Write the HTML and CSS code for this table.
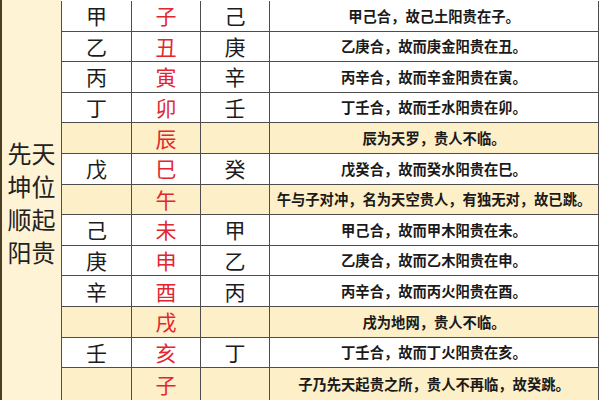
FILE: index.html
```html
<!DOCTYPE html>
<html lang="zh-CN">
<head>
<meta charset="utf-8">
<title>先天坤位顺起阳贵</title>
<link rel="stylesheet" href="styles.css">
</head>
<body>
<div class="page">
  <div class="side">
    <div class="side-text">先天<br>坤位<br>顺起<br>阳贵</div>
  </div>
  <div class="grid">
    <div class="c">甲</div><div class="c red">子</div><div class="c">己</div><div class="c note">甲己合，故己土阳贵在子。</div>
    <div class="c">乙</div><div class="c red">丑</div><div class="c">庚</div><div class="c note">乙庚合，故而庚金阳贵在丑。</div>
    <div class="c">丙</div><div class="c red">寅</div><div class="c">辛</div><div class="c note">丙辛合，故而辛金阳贵在寅。</div>
    <div class="c">丁</div><div class="c red">卯</div><div class="c">壬</div><div class="c note">丁壬合，故而壬水阳贵在卯。</div>
    <div class="c y"></div><div class="c y red">辰</div><div class="c y"></div><div class="c y note">辰为天罗，贵人不临。</div>
    <div class="c">戊</div><div class="c red">巳</div><div class="c">癸</div><div class="c note">戊癸合，故而癸水阳贵在巳。</div>
    <div class="c y"></div><div class="c y red">午</div><div class="c y"></div><div class="c y note">午与子对冲，名为天空贵人，有独无对，故已跳。</div>
    <div class="c">己</div><div class="c red">未</div><div class="c">甲</div><div class="c note">甲己合，故而甲木阳贵在未。</div>
    <div class="c">庚</div><div class="c red">申</div><div class="c">乙</div><div class="c note">乙庚合，故而乙木阳贵在申。</div>
    <div class="c">辛</div><div class="c red">酉</div><div class="c">丙</div><div class="c note">丙辛合，故而丙火阳贵在酉。</div>
    <div class="c y"></div><div class="c y red">戌</div><div class="c y"></div><div class="c y note">戌为地网，贵人不临。</div>
    <div class="c">壬</div><div class="c red">亥</div><div class="c">丁</div><div class="c note">丁壬合，故而丁火阳贵在亥。</div>
    <div class="c y"></div><div class="c y red">子</div><div class="c y"></div><div class="c y note">子乃先天起贵之所，贵人不再临，故癸跳。</div>
  </div>
</div>
</body>
</html>
```
FILE: styles.css
```css
html, body {
  margin: 0;
  padding: 0;
  background: #ffffff;
}
body {
  width: 600px;
  height: 400px;
  overflow: hidden;
  font-family: "Noto Sans CJK SC", "Noto Sans", sans-serif;
  color: #1c1c1c;
}
.page {
  display: flex;
  height: 400px;
}
.side {
  width: 59px;
  border-left: 2px solid #4a3f22;
  background: #fef3d4;
  display: flex;
  align-items: center;
  justify-content: center;
  padding-top: 4px;
  box-sizing: border-box;
  width: 61px;
}
.side-text {
  font-size: 24px;
  line-height: 33px;
  color: #222;
}
.grid {
  display: grid;
  grid-template-columns: 69px 68px 68px 328px;
  grid-template-rows: repeat(12, 29.6px) 1fr;
  gap: 1px;
  background: #4d4d4d;
  border-left: 1px solid #4d4d4d;
  border-right: 1px solid #4d4d4d;
  margin-top: 1px;
  height: 399px;
}
.c {
  background: #ffffff;
  display: flex;
  align-items: center;
  justify-content: center;
  font-size: 21px;
  line-height: 1;
  color: #1c1c1c;
}
.c.y {
  background: #fdefc8;
}
.red {
  color: #e2262f;
}
.note {
  font-size: 14.3px;
  font-weight: 700;
  white-space: nowrap;
  color: #1a1a1a;
}
```
